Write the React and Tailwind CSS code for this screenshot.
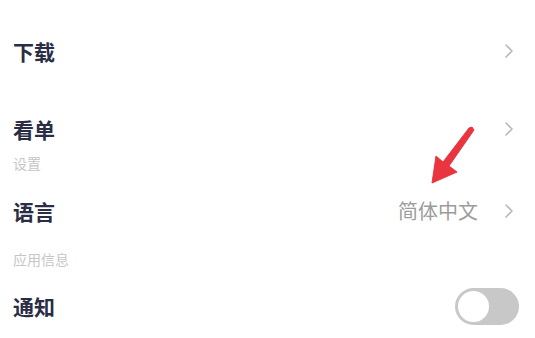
import React from "react";

const Chevron = () => (
  <svg width="12" height="16" viewBox="0 0 12 16" className="shrink-0">
    <path d="M3 2l6 6-6 6" fill="none" stroke="#b9b9b9" strokeWidth="1.6" strokeLinecap="round" strokeLinejoin="round" />
  </svg>
);

const Row = ({ label, height, children }) => (
  <div className={`flex items-center justify-between pl-[13px] pr-[20px] ${height}`}>
    <span className="text-[21px] font-bold leading-none text-[#2a2d44]">{label}</span>
    <div className="flex items-center gap-[25px]">{children}</div>
  </div>
);

const Header = ({ label }) => (
  <div className="h-[14px] pl-[13px] text-[14px] leading-[14px] text-[#c6c6c6]">{label}</div>
);

export default function App() {
  return (
    <div
      className="relative w-[535px] h-[338px] overflow-hidden bg-white"
      style={{ fontFamily: '"Noto Sans CJK SC", "Noto Sans", sans-serif' }}
    >
      <Row label="下载" height="h-[102px]">
        <Chevron />
      </Row>
      <Row label="看单" height="h-[54px]">
        <Chevron />
      </Row>
      <Header label="设置" />
      <Row label="语言" height="h-[82px]">
        <span className="text-[20px] leading-none text-[#9c9c9c]">简体中文</span>
        <Chevron />
      </Row>
      <Header label="应用信息" />
      <div className="flex h-[80px] items-center justify-between pl-[13px] pr-[16px]">
        <span className="text-[21px] font-bold leading-none text-[#2a2d44]">通知</span>
        <div className="flex h-[37px] w-[64px] items-center rounded-full bg-[#c8c8c8] px-[3px]">
          <div className="h-[31px] w-[31px] rounded-full bg-white" />
        </div>
      </div>

      {/* annotation arrow */}
      <svg className="absolute left-0 top-0" width="535" height="338" viewBox="0 0 535 338">
        <polygon
          points="432,183 457,172 449,166 474,130 472,127 469,128 443,162 436,156"
          fill="#e8353f"
          strokeLinejoin="round"
          stroke="#e8353f"
          strokeWidth="1"
        />
      </svg>
    </div>
  );
}
